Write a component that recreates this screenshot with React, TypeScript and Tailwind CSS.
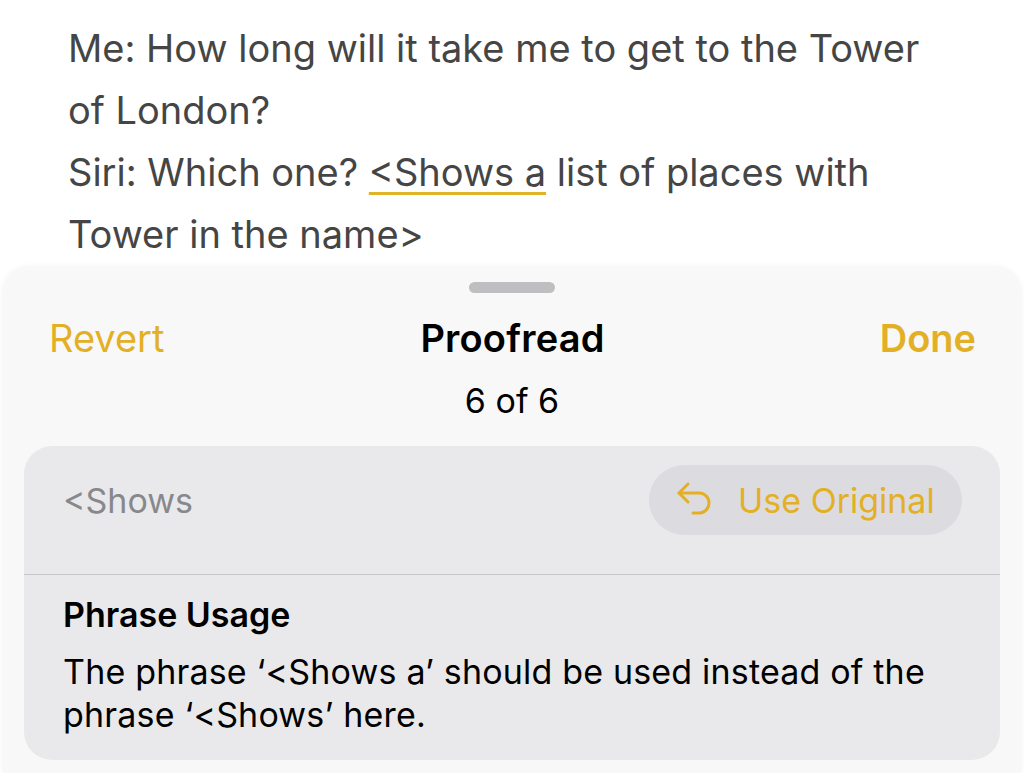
import React from "react";

const Y = "#e3b025";

function UndoIcon() {
  return (
    <svg width="40" height="38" viewBox="0 0 40 38" fill="none" stroke={Y} strokeWidth="3" strokeLinecap="round" strokeLinejoin="round">
      <path d="M12 3 3 12l9 9" />
      <path d="M3 12h20a10 10 0 0 1 10 10v0a10 10 0 0 1-10 10h-6" />
    </svg>
  );
}

export default function App() {
  return (
    <div className="w-[1024px] h-[773px] bg-white overflow-hidden font-['Inter',sans-serif] flex flex-col">
      <div className="pl-[68px] pt-[17px] text-[38px] leading-[62px] text-[#454545]">
        <div className="whitespace-nowrap">Me: How long will it take me to get to the Tower</div>
        <div className="whitespace-nowrap">of London?</div>
        <div className="whitespace-nowrap">
          Siri: Which one?{" "}
          <span className="underline decoration-[#e0b428] decoration-[3px] underline-offset-[6px]">&lt;Shows a</span>{" "}
          list of places with
        </div>
        <div className="whitespace-nowrap">Tower in the name&gt;</div>
      </div>
      <div className="mx-[3px] mt-[2px] flex-1 bg-[#f8f8f8] rounded-t-[26px] shadow-[0_0_6px_rgba(0,0,0,0.06)] pt-[15px] flex flex-col">
        <div className="mx-auto w-[86px] h-[11px] rounded-full bg-[#bfbfc1]" />
        <div className="mt-[23px] h-[44px] leading-[44px] grid grid-cols-[1fr_auto_1fr] items-center pl-[46px] pr-[45px] text-[38px]">
          <span className="text-[#e3b025] justify-self-start">Revert</span>
          <span className="font-semibold text-black tracking-[0.2px]">Proofread</span>
          <span className="font-semibold text-[#e3b025] justify-self-end">Done</span>
        </div>
        <div className="mt-[21px] h-[40px] leading-[40px] text-center text-[34px] text-black">6 of 6</div>
        <div className="mt-[25px] mx-[21px] bg-[#e9e9eb] rounded-[28px] flex flex-col">
          <div className="pt-[19px] pb-[39px] pl-[39px] pr-[38px] flex items-center justify-between">
            <span className="text-[34px] text-[#88888c]">&lt;Shows</span>
            <div className="w-[313px] h-[70px] rounded-full bg-[#dcdce0] flex items-center pl-[27px] gap-[22px]">
              <UndoIcon />
              <span className="text-[34px] text-[#e3b025]">Use Original</span>
            </div>
          </div>
          <div className="h-px bg-[#c6c6c9]" />
          <div className="pl-[39px] pt-[20px] pb-[24px]">
            <div className="text-[34px] leading-[40px] font-semibold text-black">Phrase Usage</div>
            <div className="mt-[15px] text-[34px] leading-[43px] text-black tracking-[0.18px]">
              <div className="whitespace-nowrap">The phrase ‘&lt;Shows a’ should be used instead of the</div>
              <div className="whitespace-nowrap">phrase ‘&lt;Shows’ here.</div>
            </div>
          </div>
        </div>
      </div>
    </div>
  );
}
